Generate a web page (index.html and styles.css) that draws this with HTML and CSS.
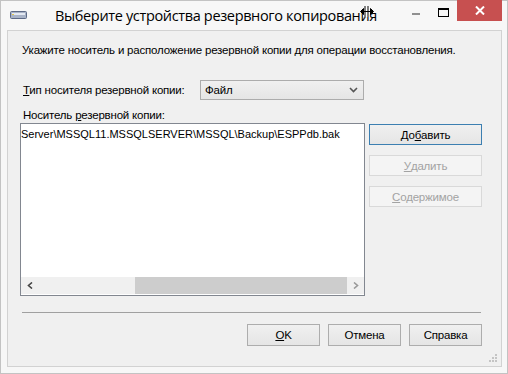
FILE: index.html
```html
<!DOCTYPE html>
<html>
<head>
<meta charset="utf-8">
<link rel="stylesheet" href="styles.css">
</head>
<body>
<div class="window">
  <div class="titlebar">
    <svg class="app-icon" width="17" height="8" viewBox="0 0 17 8">
      <rect x="0.5" y="0.5" width="16" height="7" rx="1" fill="#a9b4c8" stroke="#5d6a86"/>
      <rect x="2" y="2" width="13" height="2" fill="#e4e9f2"/>
      <rect x="2" y="3" width="2" height="1" fill="#e3c64d"/>
    </svg>
    <span class="title">Выберите устройства резервного копирования</span>
    <svg class="cursor" width="14" height="13" viewBox="0 0 14 13">
      <path d="M5 1v11M8 1v11" stroke="#fff" stroke-width="3"/>
      <path d="M5 1v11M8 1v11" stroke="#000" stroke-width="1"/>
      <path d="M0.5 6.5L3.5 3.5V9.5Z M13.5 6.5L10.5 3.5V9.5Z M3 6.5H11" stroke="#000" fill="#000"/>
    </svg>
    <div class="controls">
      <span class="ctl-min"></span>
      <span class="ctl-max"></span>
      <span class="ctl-close">
        <svg width="10" height="9" viewBox="0 0 10 9"><path d="M1 0.5L9 8.5M9 0.5L1 8.5" stroke="#fff" stroke-width="2"/></svg>
      </span>
    </div>
  </div>
  <div class="content">
    <div class="intro">Укажите носитель и расположение резервной копии для операции восстановления.</div>
    <div class="type-row">
      <label class="type-label"><u>Т</u>ип носителя резервной копии:</label>
      <div class="select">
        <span>Файл</span>
        <svg width="9" height="6" viewBox="0 0 9 6"><path d="M1 1L4.5 4.5L8 1" stroke="#555" stroke-width="1.6" fill="none"/></svg>
      </div>
    </div>
    <div class="list-label">Носитель <u>р</u>езервной копии:</div>
    <div class="list-row">
      <div class="listbox">
        <div class="list-items">
          <div class="list-item">Server\MSSQL11.MSSQLSERVER\MSSQL\Backup\ESPPdb.bak</div>
        </div>
        <div class="hscroll">
          <span class="arrow">
            <svg width="6" height="7" viewBox="0 0 6 7"><path d="M5 0.5L1.5 3.5L5 6.5" stroke="#444" stroke-width="1.6" fill="none"/></svg>
          </span>
          <span class="track-left"></span>
          <span class="thumb"></span>
          <span class="arrow">
            <svg width="6" height="7" viewBox="0 0 6 7"><path d="M1 0.5L4.5 3.5L1 6.5" stroke="#999" stroke-width="1.6" fill="none"/></svg>
          </span>
        </div>
      </div>
      <div class="side-buttons">
        <div class="btn default">До<u>б</u>авить</div>
        <div class="btn disabled"><u>У</u>далить</div>
        <div class="btn disabled"><u>С</u>одержимое</div>
      </div>
    </div>
    <div class="separator"></div>
    <div class="bottom-buttons">
      <div class="btn wide"><u>О</u>K</div>
      <div class="btn wide">Отмена</div>
      <div class="btn wide">Справка</div>
    </div>
    <svg class="grip" width="9" height="9" viewBox="0 0 9 9">
      <g fill="#c4c4c4">
        <rect x="6" y="0" width="2" height="2"/>
        <rect x="3" y="3" width="2" height="2"/><rect x="6" y="3" width="2" height="2"/>
        <rect x="0" y="6" width="2" height="2"/><rect x="3" y="6" width="2" height="2"/><rect x="6" y="6" width="2" height="2"/>
      </g>
    </svg>
  </div>
</div>
</body>
</html>
```
FILE: styles.css
```css
* { box-sizing: border-box; }
html, body { margin: 0; padding: 0; }
body {
  width: 508px; height: 374px; overflow: hidden;
  font-family: "Liberation Sans", Arial, sans-serif;
  font-size: 11.5px; letter-spacing: -0.2px; color: #000;
}
.window {
  width: 508px; height: 374px;
  border: 1px solid #c3c3c3;
  background: #f7f7f7;
  display: flex; flex-direction: column;
}
.titlebar {
  height: 29px; position: relative; flex: none;
}
.app-icon { position: absolute; left: 9px; top: 10px; }
.title {
  position: absolute; left: 54px; top: 5px;
  font-family: "Open Sans", sans-serif; font-size: 14.5px; color: #000;
  line-height: 20px; letter-spacing: -0.35px;
}
.cursor { position: absolute; left: 359px; top: 4px; }
.controls { position: absolute; right: 5px; top: -1px; display: flex; align-items: flex-start; }
.ctl-min { width: 8px; height: 2px; background: #909090; margin: 13px 18px 0 0; }
.ctl-max { width: 11px; height: 9px; border: 1px solid #000; border-top-width: 2px; margin: 8px 8px 0 0; }
.ctl-close {
  width: 45px; height: 21px; background: #c75050;
  display: flex; align-items: center; justify-content: center;
}
.content {
  flex: 1;
  margin: 0 5px 6px 6px;
  border: 1px solid #d2d2d2;
  background: #f0f0f0;
  position: relative;
  display: flex; flex-direction: column;
}
.intro { margin-top: 11px; padding-left: 14px; height: 16px; line-height: 16px; }
.type-row { margin-top: 22px; height: 20px; display: flex; align-items: center; }
.type-label { width: 192px; padding-left: 15px; line-height: 16px; }
.select {
  width: 164px; height: 20px;
  border: 1px solid #acacac;
  background: linear-gradient(#f0f0f0, #e5e5e5);
  display: flex; align-items: center; justify-content: space-between;
  padding: 0 5px 0 4px;
}
.list-label { margin-top: 7px; padding-left: 15px; height: 16px; line-height: 16px; }
.list-row { display: flex; margin-top: 0; }
.listbox {
  margin-left: 12px; width: 345px; height: 173px;
  border: 1px solid #828790; background: #fff;
  display: flex; flex-direction: column;
}
.list-items { flex: 1; overflow: hidden; }
.list-item {
  font-family: "Liberation Sans", Arial, sans-serif; font-size: 11px;
  padding: 4px 0 0 0; line-height: 13px; white-space: nowrap; letter-spacing: 0;
}
.hscroll { height: 17px; display: flex; background: #f0f0f0; margin-bottom: 1px; }
.hscroll .arrow { width: 17px; display: flex; align-items: center; justify-content: center; }
.track-left { width: 97px; }
.thumb { flex: 1; background: #cdcdcd; }
.side-buttons { margin-left: 4px; display: flex; flex-direction: column; gap: 10px; padding-top: 1px; }
.btn {
  width: 113px; height: 21px;
  border: 1px solid #adadad;
  background: linear-gradient(#f0f0f0, #e5e5e5);
  display: flex; align-items: center; justify-content: center;
  line-height: 14px;
}
.btn.default { border-color: #3c7fb1; }
.btn.disabled { border-color: #d9d9d9; background: #f4f4f4; color: #a3a3a3; }
.separator { margin: 16px 0 0 14px; width: 459px; height: 1px; background: #a0a0a0; }
.bottom-buttons { margin-top: 11px; display: flex; justify-content: flex-end; gap: 8px; padding-right: 19px; }
.btn.wide { width: 73px; height: 22px; }
.grip { position: absolute; right: 3px; bottom: 3px; }
u { text-decoration: underline; text-underline-offset: 1px; }
```
